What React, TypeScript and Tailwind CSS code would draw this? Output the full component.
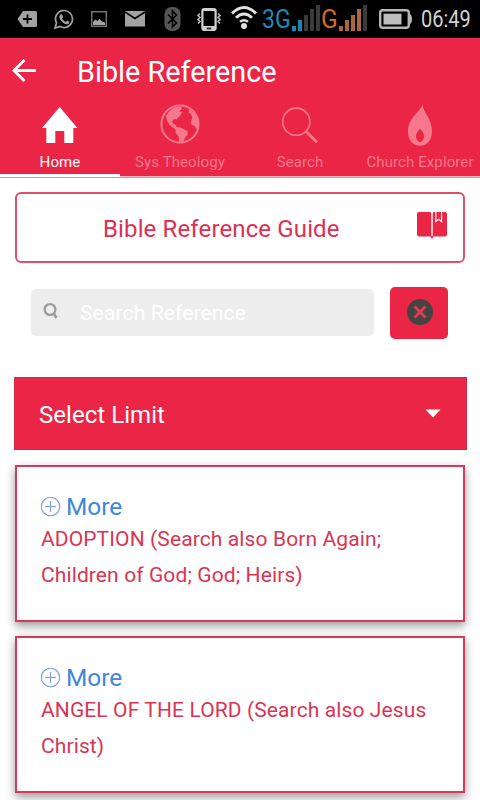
import React from 'react';

const references = [
  { id: 'adoption', title: 'ADOPTION (Search also Born Again; Children of God; God; Heirs)' },
  { id: 'angel', title: 'ANGEL OF THE LORD (Search also Jesus Christ)' },
];

function HomeIcon() {
  return (
    <svg width="36" height="42" viewBox="0 0 36 42" fill="currentColor">
      <path d="M17.7 3 L35.4 24 H31.3 V39 H22.3 V27 H13.3 V39 H4.3 V24 H0 Z" />
    </svg>
  );
}

function EarthIcon() {
  return (
    <svg width="40" height="42" viewBox="0 0 40 42" fill="currentColor">
      <circle cx="20" cy="20" r="18.6" fill="none" stroke="currentColor" strokeWidth="2" />
      <path d="M6 11.500 L10 6.500 L14 3.500 L20.500 2.500 L22 4.500 L19 8 L22.500 7.500 L20 12 L17.500 14 L17 15.500 L14 15 L12 17.500 L13 19.500 L15.500 20.500 L16.500 23 L20.500 23.500 L27.500 27 L27.800 30.500 L25.500 33 L23.500 37 L19.500 38.500 L18.500 32 L15.500 29 L15.500 25.500 L9.500 21 L7 17 Z" />
      <path d="M29.500 5 L35.500 10.500 L38.500 18 L38 25.500 L36 24.500 L34.500 22 L31.500 21 L31 17 L32.500 13.500 L31 10 L28.500 8.500 Z" />
    </svg>
  );
}

function SearchIcon() {
  return (
    <svg width="38" height="42" viewBox="0 0 38 42" fill="none" stroke="currentColor">
      <circle cx="15.300" cy="17.700" r="13.600" strokeWidth="1.600" />
      <path d="M25.500 28 L36 38.300" strokeWidth="2.800" />
    </svg>
  );
}

function FlameIcon() {
  return (
    <svg width="24" height="42" viewBox="0 0 24 42" fill="currentColor">
      <path
        fillRule="evenodd"
        d="M14.500 0 C14.500 8 24 14 24 27 C24 36 19 41.800 12 41.800 C5 41.800 0 36 0 28 C0 13 12 9 14.500 0 Z M12 24.500 C10 27.500 8 29 8 32 C8 35.500 10 38 12 38 C14 38 16 35.500 16 32 C16 29 14 27.500 12 24.500 Z"
      />
    </svg>
  );
}

const tabs = [
  { label: 'Home', icon: <HomeIcon />, active: true },
  { label: 'Sys Theology', icon: <EarthIcon />, active: false },
  { label: 'Search', icon: <SearchIcon />, active: false },
  { label: 'Church Explorer', icon: <FlameIcon />, active: false },
];

function SignalBars({ on, off, level }: { on: string; off: string; level: number }) {
  const heights = [5, 11, 16, 22, 26];
  return (
    <svg width="28" height="38" viewBox="0 0 28 38" className="shrink-0">
      {heights.map((h, i) => (
        <rect key={h} x={i * 6} y={31 - h} width="4" height={h} fill={i < level ? on : off} />
      ))}
    </svg>
  );
}

function StatusBar() {
  return (
    <div className="flex h-[38px] items-center bg-black pl-[17px]">
      {/* Notifications */}
      <svg width="20" height="38" viewBox="0 0 20 38" className="shrink-0">
        <path d="M6 11 H18.500 Q20 11 20 12.500 V25.500 Q20 27 18.500 27 H6 L0.500 19 Z" fill="#a2a2a2" />
        <path d="M10.500 14.500 V23.500 M6 19 H15" stroke="#000" strokeWidth="1.800" />
      </svg>
      <svg width="20" height="38" viewBox="0 0 20 38" className="ml-[17px] shrink-0" fill="none">
        <path d="M1 28 L2.500 23 A8.500 8.500 0 1 1 6 26.500 Z" stroke="#a2a2a2" strokeWidth="1.700" />
        <path d="M6.300 14.500 L8 14.200 L9.200 17 L8 18.500 Q9.500 21 12 22 L13.300 20.500 L15.500 21.800 Q15.300 24.300 13 24.300 C9 24.300 5 19 5.300 16.500 Z" fill="#a2a2a2" />
      </svg>
      <svg width="16" height="38" viewBox="0 0 16 38" className="ml-[17px] shrink-0">
        <rect x="0.700" y="11.700" width="14.600" height="14.600" fill="none" stroke="#777" strokeWidth="1.400" />
        <path d="M2 25 V22 L4.500 19.500 L6.500 21 L8.500 18.800 L11 21.500 L14 22.500 V25 Z" fill="#a2a2a2" />
      </svg>
      <svg width="20" height="38" viewBox="0 0 20 38" className="ml-[18px] shrink-0">
        <rect y="11" width="20" height="15.500" fill="#a2a2a2" />
        <path d="M0 12 L10 18.500 L20 12" fill="none" stroke="#000" strokeWidth="1.800" />
      </svg>
      <svg width="17" height="38" viewBox="0 0 17 38" className="ml-[19px] shrink-0">
        <rect x="0.500" y="7" width="16" height="24" rx="7" fill="#555" />
        <path d="M4 14.500 L12.500 23 L8.500 27 V11 L12.500 15 L4 23.500" fill="none" stroke="#000" strokeWidth="1.600" />
      </svg>
      <svg width="24" height="38" viewBox="0 0 24 38" className="ml-[16px] shrink-0">
        <path d="M3 13.500 L1 15.500 L3 17.500 L1 19.500 L3 21.500 L1 23.500 M21 13.500 L23 15.500 L21 17.500 L23 19.500 L21 21.500 L23 23.500" fill="none" stroke="#b5b5b5" strokeWidth="1.600" />
        <rect x="4.300" y="8" width="15.400" height="23" rx="3" fill="#cfcfcf" />
        <rect x="6.500" y="11" width="11" height="15" fill="#000" />
        <rect x="9.500" y="27.500" width="5" height="2" rx="1" fill="#333" />
      </svg>
      {/* Connectivity */}
      <svg width="26" height="38" viewBox="0 0 26 38" className="ml-[10px] shrink-0" fill="none" stroke="#e0e0e0">
        <path d="M1 13.500 Q13 1.500 25 13.500" strokeWidth="2.800" />
        <path d="M5 17.800 Q13 10 21 17.800" strokeWidth="2.800" />
        <path d="M9 21.800 Q13 18.500 17 21.800" strokeWidth="2.400" />
        <circle cx="13" cy="26" r="3" fill="#e0e0e0" stroke="none" />
      </svg>
      <span className="ml-[5px] w-[30px] shrink-0">
        <span className="inline-block origin-left scale-x-[0.92] text-[25px] leading-[37px] text-[#2187b5]">3G</span>
      </span>
      <SignalBars on="#1489b4" off="#3b3b3b" level={2} />
      <span className="ml-px w-[18px] shrink-0">
        <span className="inline-block origin-left scale-x-[0.98] text-[25px] leading-[37px] text-[#cf6b24]">G</span>
      </span>
      <SignalBars on="#a9673f" off="#3b3b3b" level={4} />
      <svg width="34" height="38" viewBox="0 0 34 38" className="ml-[12px] shrink-0">
        <path d="M30 14 H31 Q33 15 33 19 Q33 23 31 24 H30 Z" fill="#b5b5b5" />
        <rect x="1.200" y="10.200" width="28.600" height="17.600" rx="2.500" fill="none" stroke="#b5b5b5" strokeWidth="2.400" />
        <rect x="4.500" y="13.700" width="18" height="10.800" fill="#bdbdbd" />
      </svg>
      <span className="ml-[8px] inline-block origin-left scale-x-[0.87] pt-[2px] text-[23px] leading-[36px] text-[#d2d2d2]">06:49</span>
    </div>
  );
}

function Header() {
  return (
    <header className="h-[139px] bg-[#eb2545] text-white">
      <div className="flex h-[66px] items-center pl-[11px]">
        <svg width="26" height="26" viewBox="0 0 26 26" fill="none" stroke="currentColor" strokeWidth="2.800">
          <path d="M25 12.500 H3 M13.500 2 L3 12.500 L13.500 23" />
        </svg>
        <h1 className="ml-[40px] pt-px text-[28.8px] leading-[66px]">Bible Reference</h1>
      </div>
      <nav className="grid h-[73px] grid-cols-4">
        {tabs.map((tab) => (
          <a
            key={tab.label}
            className={
              tab.active
                ? 'flex flex-col items-center border-b-[3px] border-white'
                : 'flex flex-col items-center border-b border-[#f9b5c0] text-[#f5788d]'
            }
          >
            {tab.icon}
            <span className="mt-[7px] text-[15px] leading-[19px] tracking-[0.1px] whitespace-nowrap">{tab.label}</span>
          </a>
        ))}
      </nav>
    </header>
  );
}

function ReferenceCard({ title }: { title: string }) {
  return (
    <article className="h-[157px] border-2 border-[#d53a58] bg-white pt-[24px] pl-[24px] shadow-[0_4px_9px_rgba(0,0,0,0.4)]">
      <a className="flex items-center text-[24.4px] leading-[31px] text-[#3f87d9]">
        <svg width="20" height="20" viewBox="0 0 20 20" fill="none" stroke="#7b9fe2" strokeWidth="1.100">
          <circle cx="9.500" cy="9.500" r="9.200" />
          <path d="M9.500 4 V15 M4 9.500 H15" />
        </svg>
        <span className="ml-[5px]">More</span>
      </a>
      <p className="-mt-px w-[400px] text-[21px] leading-[36px] tracking-[0.11px] text-[#d93553]">{title}</p>
    </article>
  );
}

export default function App() {
  return (
    <div className="h-[800px] w-[480px] overflow-hidden bg-white font-['Roboto',sans-serif]">
      <StatusBar />
      <Header />
      <div className="border-t border-[#e58c9b] px-[15px] pt-[14px]">
        {/* Guide title */}
        <section className="flex h-[71px] items-center rounded-[6px] border-2 border-[#dd5069] pr-[16px] pl-[86px] text-[#dc3152]">
          <h2 className="flex-1 pt-[2px] text-[24px] leading-[36px] tracking-[0.13px]">Bible Reference Guide</h2>
          <svg width="30" height="30" viewBox="0 0 30 30" className="mb-[5px]">
            <path d="M2 2 H13 Q14.300 2 14.300 3.500 V26.500 H2 Q0 26.500 0 24.500 V4 Q0 2 2 2 Z" fill="#eb2545" />
            <path d="M17 2 H28 Q30 2 30 4 V24.500 Q30 26.500 28 26.500 H15.700 V3.500 Q15.700 2 17 2 Z" fill="#eb2545" />
            <path d="M13.500 26 H16.500 L15 29.500 Z" fill="#eb2545" />
            <path d="M18.800 1.500 V11.500 L21.700 9.200 L24.600 11.500 V1.500" fill="none" stroke="#fff" strokeWidth="1.100" />
          </svg>
        </section>

        {/* Search row */}
        <div className="mt-[24px] flex items-center px-[16px]">
          <div className="mr-[16px] mb-[2px] flex h-[47px] w-[343px] items-center rounded-[5px] bg-[#ededed] pl-[12px]">
            <svg width="15" height="18" viewBox="0 0 15 18" className="mb-[3px]" fill="none" stroke="#9c9c9c">
              <circle cx="7" cy="7.500" r="5.400" strokeWidth="2.300" />
              <path d="M10.500 11 L13.500 16" strokeWidth="2.600" />
            </svg>
            <span className="ml-[22px] pt-[2px] text-[21px] leading-[30px] tracking-[0.14px] text-white">Search Reference</span>
          </div>
          <button className="flex h-[52px] w-[58px] items-center justify-center rounded-[5px] bg-[#eb2545]">
            <svg width="26" height="26" viewBox="0 0 26 26" className="mb-[2px] ml-px">
              <circle cx="13" cy="13" r="13" fill="#444441" />
              <path d="M7.500 7.500 L18.500 18.500 M18.500 7.500 L7.500 18.500" stroke="#e83a55" strokeWidth="2.800" />
            </svg>
          </button>
        </div>

        {/* Limit select */}
        <div className="-mr-[2px] -ml-px mt-[38px] flex h-[73px] items-center justify-between border border-[#d22a47] bg-[#eb2545] pr-[25px] pl-[24px] text-white">
          <span className="pt-[2px] text-[24px] leading-[36px] tracking-[0.05px]">Select Limit</span>
          <svg width="16" height="9" viewBox="0 0 16 9">
            <path d="M0.500 0.500 H15.500 L8 8.500 Z" fill="#fff" />
          </svg>
        </div>

        <div className="mt-[15px] flex flex-col gap-[14px]">
          {references.map((item) => (
            <ReferenceCard key={item.id} title={item.title} />
          ))}
        </div>
      </div>
    </div>
  );
}
